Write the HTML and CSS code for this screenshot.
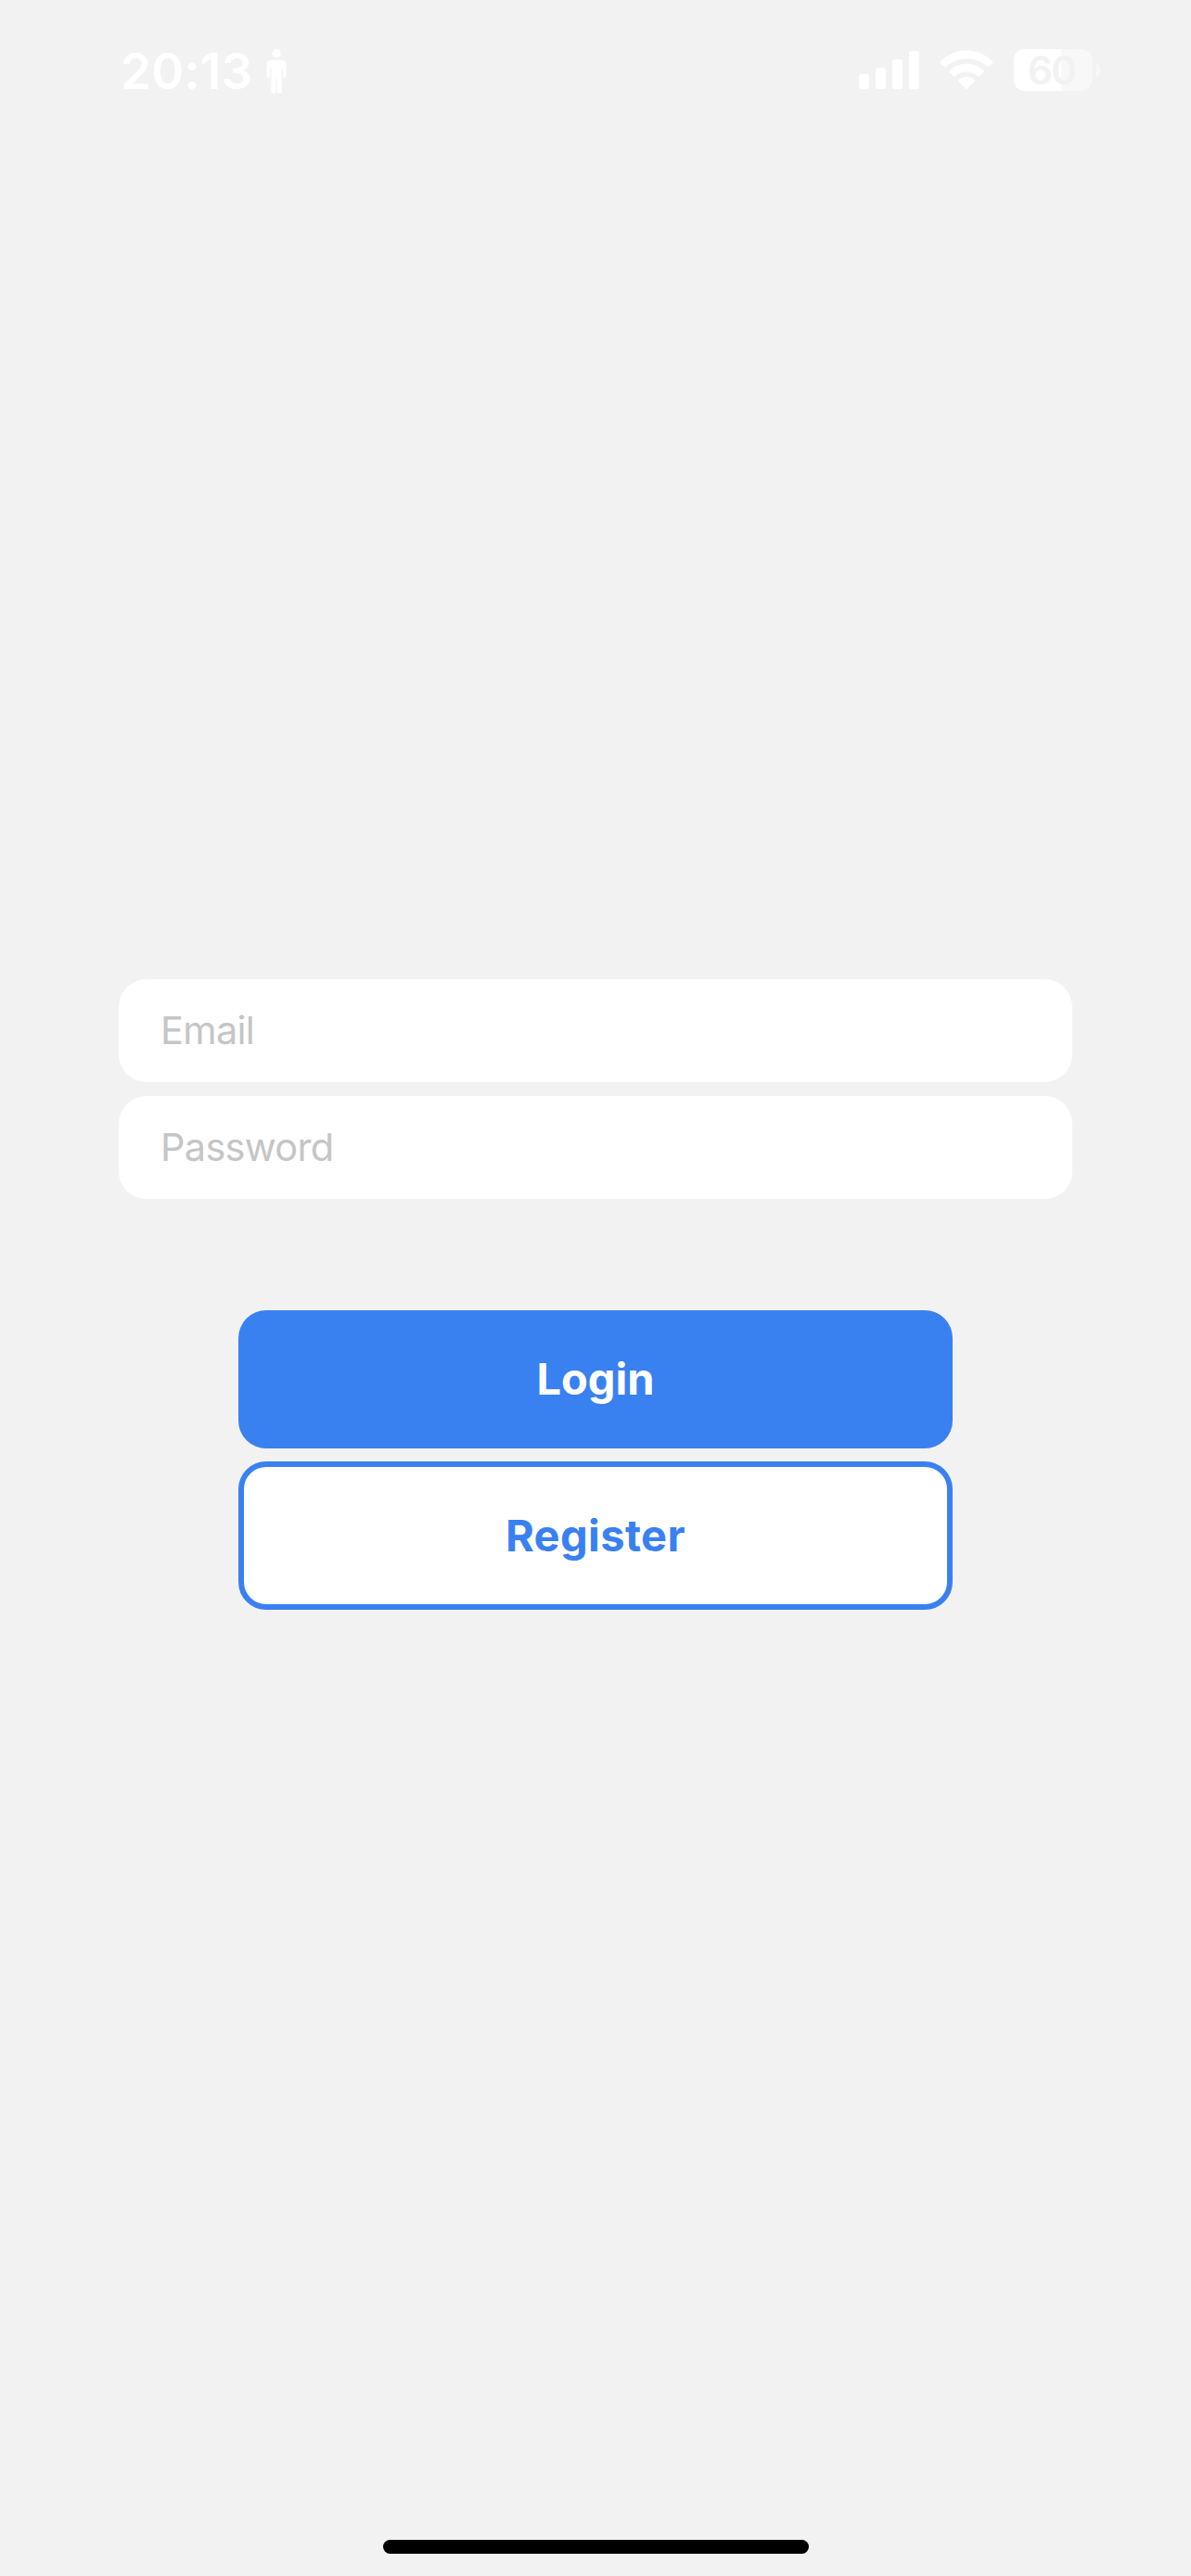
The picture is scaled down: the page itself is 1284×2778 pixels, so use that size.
FILE: index.html
```html
<!DOCTYPE html>
<html lang="en">
<head>
    <meta charset="UTF-8">
    <meta name="viewport" content="width=device-width, initial-scale=1.0">
    <title>Login</title>
    <link rel="stylesheet" href="styles.css">
</head>
<body>

    <div class="status-bar">
        <div class="status-left">
            <span class="time">20:13</span>
            <svg class="person-icon" width="22" height="50" viewBox="0 0 22 50">
                <circle cx="11" cy="5.5" r="4.7"/>
                <path d="M6 12.5H16Q21.6 12.5 21.6 18.5V30Q21.6 32 19.8 32Q18 32 18 30V21.5H16.8V46.5Q16.8 49 14.3 49Q11.7 49 11.7 46.5V32.5H10.6V46.5Q10.6 49 8 49Q5.4 49 5.4 46.5V21.5H4.3V30Q4.3 32 2.4 32Q.5 32 .5 30V18.5Q.5 12.5 6 12.5Z"/>
            </svg>
        </div>
        <div class="status-right">
            <svg class="signal-icon" width="65" height="41" viewBox="0 0 65 41">
                <rect x="0" y="25" width="11" height="16" rx="3"/>
                <rect x="18" y="18" width="11" height="23" rx="3"/>
                <rect x="36" y="9" width="11" height="32" rx="3"/>
                <rect x="54" y="0" width="11" height="41" rx="3"/>
            </svg>
            <svg class="wifi-icon" width="58" height="43" viewBox="0 0 58 43">
                <path d="M.8 12.2Q0 13 .8 13.8L5 18Q5.8 18.8 6.6 18C19 6.200 39 6.200 51.400 18Q52.200 18.800 53 18L57.200 13.800Q58 13 57.200 12.200C41.500-3.900 16.500-3.900.8 12.200Z"/>
                <path d="M10.600 22.200Q9.800 23 10.600 23.800L15 28.200Q15.800 29 16.600 28.200C23.500 22 34.500 22 41.400 28.200Q42.200 29 43 28.200L47.400 23.800Q48.200 23 47.400 22.200C37 12.400 21 12.400 10.600 22.200Z"/>
                <path d="M20.400 32.200Q19.600 33 20.400 33.800L28.200 41.700Q29 42.500 29.800 41.700L37.600 33.800Q38.400 33 37.600 32.200C32.800 28 25.200 28 20.400 32.200Z"/>
            </svg>
            <svg class="battery-icon" width="94" height="45" viewBox="0 0 94 45">
                <rect class="battery-empty" width="85" height="45" rx="13"/>
                <path d="M13 0H51V45H13Q0 45 0 32V13Q0 0 13 0Z"/>
                <path class="battery-empty" d="M88.500 15.500Q93.500 18 93.500 22.500T88.500 29.500Z"/>
                <text class="battery-level" x="41.500" y="37.500" textLength="53">60</text>
            </svg>
        </div>
    </div>

    <form class="container">
        <div class="input-container">
            <input type="email" class="input" placeholder="Email">
            <input type="password" class="input" placeholder="Password">
        </div>
        <div class="button-container">
            <button type="button" class="button">Login</button>
            <button type="button" class="button button-outline">Register</button>
        </div>
    </form>

    <div class="home-indicator"></div>

</body>
</html>
```
FILE: styles.css
```css
* {
    box-sizing: border-box;
}

body {
    margin: 0;
    height: 2778px;
    display: flex;
    flex-direction: column;
    align-items: center;
    background: #f2f2f2;
    font-family: Inter, "Liberation Sans", sans-serif;
}

.status-bar {
    width: 100%;
    height: 141px;
    padding: 0 97px 0 130px;
    display: flex;
    justify-content: space-between;
    fill: #fff;
    color: #fff;
}

.status-left, .status-right {
    display: flex;
    align-items: flex-start;
}

.time {
    width: 157px;
    padding-top: 45px;
    font-size: 53px;
    line-height: 64px;
    font-weight: 600;
    letter-spacing: 0.3px;
}

.person-icon {
    margin-top: 52px;
}

.signal-icon {
    margin-top: 55px;
}

.wifi-icon {
    margin: 54px 22px 0 22px;
}

.battery-icon {
    margin-top: 53px;
    overflow: visible;
}

.battery-empty {
    fill: #f8f8f8;
}

.battery-level {
    fill: #f2f2f2;
    font-size: 42px;
    font-weight: 600;
    text-anchor: middle;
}

.container {
    flex: 1;
    width: 100%;
    display: flex;
    flex-direction: column;
    align-items: center;
    padding-top: 915px;
}

.input-container {
    width: 1028px;
    display: flex;
    flex-direction: column;
    gap: 15px;
}

.input {
    width: 100%;
    height: 111px;
    padding: 0 45px 2px;
    border: none;
    border-radius: 30px;
    background: #fff;
    font-family: inherit;
    font-size: 41.5px;
    letter-spacing: -0.7px;
}

.input::placeholder {
    color: #c5c5c5;
}

.button-container {
    width: 770px;
    margin-top: 120px;
    display: flex;
    flex-direction: column;
    gap: 14px;
}

.button {
    width: 100%;
    height: 149px;
    padding: 0 0 2px;
    border: none;
    border-radius: 30px;
    background: #3981f1;
    color: #fff;
    font-family: inherit;
    font-size: 47px;
    font-weight: 700;
}

.button-outline {
    height: 160px;
    border: 6px solid #3981f1;
    background: #fff;
    color: #3981f1;
    letter-spacing: 0.4px;
}

.home-indicator {
    width: 459px;
    height: 15px;
    margin-bottom: 24px;
    border-radius: 8px;
    background: #000;
}
```
